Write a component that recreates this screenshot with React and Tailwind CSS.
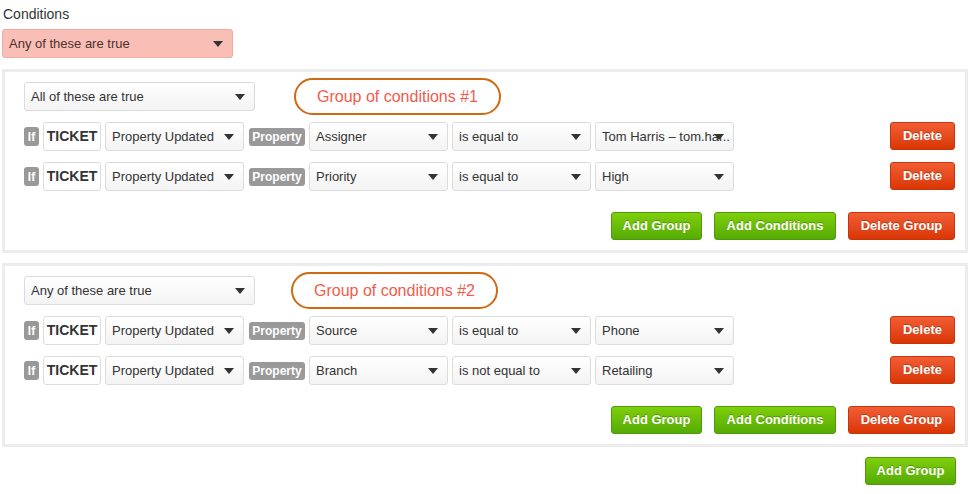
import React from 'react';

const font = { fontFamily: '"Liberation Sans", Arial, sans-serif' };

function Caret() {
  return (
    <svg width="10" height="6" viewBox="0 0 10 6" className="absolute right-[9px] top-1/2 -translate-y-1/2">
      <path d="M0 0 L10 0 L5 6 Z" fill="#333" />
    </svg>
  );
}

function Select({ value, className = '', pink = false }) {
  return (
    <div
      className={`relative flex h-[29px] items-center overflow-hidden rounded-[3px] border pl-[6px] text-[13px] ${
        pink
          ? 'border-[#f2aaa0] bg-[#f9beb5] text-[#4a3330]'
          : 'border-[#dcdcdc] bg-gradient-to-b from-white to-[#f3f3f3] text-[#333]'
      } ${className}`}
    >
      <span className="whitespace-nowrap">{value}</span>
      <Caret />
    </div>
  );
}

function Button({ label, color = 'green', className = '' }) {
  const styles =
    color === 'green'
      ? 'border-[#4d9a0a] bg-gradient-to-b from-[#7fcf0c] to-[#55ab03]'
      : 'border-[#c8350c] bg-gradient-to-b from-[#f25d33] to-[#d93600]';
  return (
    <button
      type="button"
      className={`flex h-[28px] items-center justify-center rounded-[3px] border text-[13px] font-bold text-white [text-shadow:0_-1px_0_rgba(0,0,0,0.25)] ${styles} ${className}`}
    >
      {label}
    </button>
  );
}

function ConditionRow({ property, operator, value }) {
  return (
    <div className="flex items-start">
      <div className="flex items-center gap-[4px]">
        <span className="flex h-[19px] w-[15px] items-center justify-center rounded-[3px] bg-[#999] text-[12px] font-bold text-white">
          If
        </span>
        <div className="flex h-[29px] w-[58px] items-center justify-center rounded-[3px] border border-[#dcdcdc] bg-white text-[14px] font-bold text-[#333]">
          TICKET
        </div>
        <Select value="Property Updated" className="w-[139px]" />
        <span className="ml-[1px] flex h-[18px] w-[56px] items-center justify-center rounded-[3px] bg-[#999] text-[12px] font-bold text-white">
          Property
        </span>
        <Select value={property} className="w-[139px]" />
        <Select value={operator} className="w-[139px]" />
        <Select value={value} className="w-[139px]" />
      </div>
      <Button label="Delete" color="red" className="ml-auto w-[65px]" />
    </div>
  );
}

function Group({ mode, title, rows, ovalGap = 'ml-[39px]' }) {
  return (
    <div className="border-[3px] border-[#ececec] pb-[10px] pl-[19px] pr-[10px] pt-[10px]">
      <div className="flex h-[29px] items-center">
        <Select value={mode} className="w-[231px]" />
        <div
          className={`${ovalGap} flex h-[37px] w-[207px] shrink-0 items-center justify-center rounded-full border-2 border-[#cf6a12] text-[16px] text-[#f35a4c]`}
        >
          {title}
        </div>
      </div>
      <div className="mt-[11px] flex flex-col gap-[11px]">
        {rows.map((r) => (
          <ConditionRow key={r.property} {...r} />
        ))}
      </div>
      <div className="mt-[21px] flex justify-end gap-[12px]">
        <Button label="Add Group" className="w-[91px]" />
        <Button label="Add Conditions" className="w-[122px]" />
        <Button label="Delete Group" color="red" className="w-[107px]" />
      </div>
    </div>
  );
}

export default function App() {
  return (
    <div className="min-h-screen w-[979px] bg-white px-[2px] pt-[5px] text-[#333]" style={font}>
      <div className="pl-[1px] text-[14px] leading-[18px]">Conditions</div>
      <Select value="Any of these are true" pink className="mt-[6px] w-[231px]" />
      <div className="mt-[11px] flex w-[966px] flex-col gap-[10px]">
        <Group
          mode="All of these are true"
          title="Group of conditions #1"
          rows={[
            { property: 'Assigner', operator: 'is equal to', value: 'Tom Harris – tom.har..' },
            { property: 'Priority', operator: 'is equal to', value: 'High' },
          ]}
        />
        <Group
          mode="Any of these are true"
          title="Group of conditions #2"
          ovalGap="ml-[36px]"
          rows={[
            { property: 'Source', operator: 'is equal to', value: 'Phone' },
            { property: 'Branch', operator: 'is not equal to', value: 'Retailing' },
          ]}
        />
      </div>
      <div className="mt-[10px] flex w-[954px] justify-end">
        <Button label="Add Group" className="w-[91px]" />
      </div>
    </div>
  );
}
